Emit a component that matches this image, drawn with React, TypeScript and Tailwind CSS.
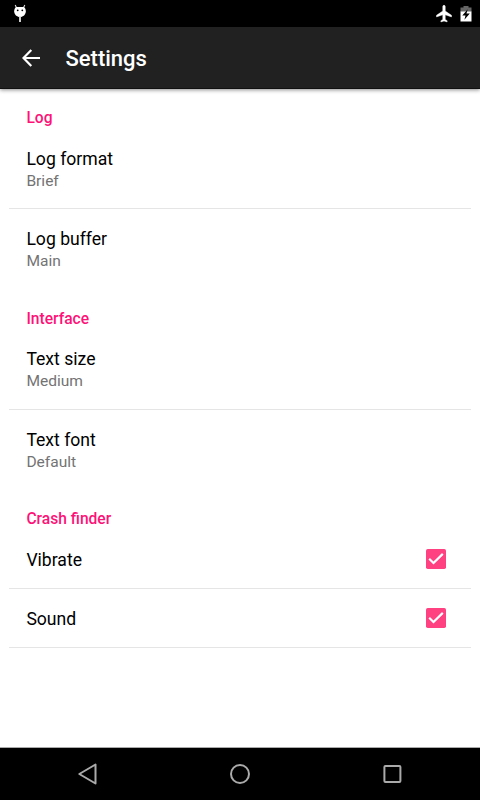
const sections = [
  {
    title: 'Log',
    items: [
      { label: 'Log format', value: 'Brief' },
      { label: 'Log buffer', value: 'Main' },
    ],
  },
  {
    title: 'Interface',
    items: [
      { label: 'Text size', value: 'Medium' },
      { label: 'Text font', value: 'Default' },
    ],
  },
];

const toggles = ['Vibrate', 'Sound'];

function StatusBar() {
  return (
    <div className="flex h-[27px] shrink-0 items-center bg-black pl-[13px] pr-2">
      {/* Debug notification */}
      <svg width="14" height="20" viewBox="0 0 14 20" className="mt-px">
        <path d="M2.2 1 3.6 4M11.8 1 10.4 4" stroke="#ddd" strokeWidth="1.1" />
        <path d="M3.2 3h7.6c1.3 1 2 2.5 2 4.2C12.8 10.6 10.2 13 7 13S1.2 10.6 1.2 7.2C1.2 5.5 1.9 4 3.2 3z" fill="#fff" />
        <path d="M7 12.5v5.5" stroke="#ccc" strokeWidth="2" />
        <circle cx="4.7" cy="6.3" r=".9" fill="#000" />
        <circle cx="9.3" cy="6.3" r=".9" fill="#000" />
      </svg>
      <svg width="20" height="20" viewBox="0 0 24 24" className="ml-auto" fill="#fff" stroke="#fff" strokeWidth=".5">
        <path d="M21 15.5v-2l-7.5-5V3c0-.83-.67-1.5-1.5-1.5S10.5 2.17 10.5 3v5.5l-7.5 5v2l7.5-2.5v5.5l-2.25 1.5V21.5l3.75-1 3.75 1V20l-2.25-1.500V13z" />
      </svg>
      <svg width="12" height="18" viewBox="0 0 12 18" className="ml-[6px] mt-px">
        <path d="M.5 2.5H3.5V1h5v1.5h3V7H.5z" fill="#666" />
        <path d="M.5 6.5h11V16.5H.5z" fill="#fff" />
        <path d="M7.7 4.3 2.3 10.4h3.2L4.4 14.8 9.8 8.6H6.5z" fill="#000" />
      </svg>
    </div>
  );
}

function SectionTitle({ children }: { children: string }) {
  return (
    <h2 className="h-[39.7px] pl-[26.4px] pt-[19.4px] text-[15.6px] font-medium leading-5 text-[#ff1177]">
      {children}
    </h2>
  );
}

function Checkbox() {
  return (
    <svg width="20" height="20" viewBox="0 0 20 20">
      <rect width="20" height="20" rx="1.8" fill="#ff4081" />
      <path d="M3.2 9.8 7.5 14 16.8 4.9" fill="none" stroke="#fff" strokeWidth="2.2" />
    </svg>
  );
}

export default function App() {
  return (
    <div className="flex h-[800px] w-[480px] flex-col overflow-hidden bg-white font-['Roboto',sans-serif]">
      <StatusBar />
      <header className="relative flex h-[62px] shrink-0 items-center border-b border-[#111] bg-[#212121] shadow-[0_1px_4px_rgba(0,0,0,0.45)]">
        <svg width="18" height="18" viewBox="0 0 18 18" className="ml-[22px]" fill="none" stroke="#fff" strokeWidth="2.2">
          <path d="M9.3.9 1.5 9l7.8 8.100M1.4 9H18" />
        </svg>
        <h1 className="ml-[25.5px] mt-[3px] text-[22px] font-medium leading-7 text-white">Settings</h1>
      </header>

      <main className="flex-1">
        {sections.map((s) => (
          <section key={s.title}>
            <SectionTitle>{s.title}</SectionTitle>
            {s.items.map((item, i) => (
              <div
                key={item.label}
                className={`mx-[9px] h-[80.4px] pl-[17.4px] pt-[18px] ${i === 0 ? 'border-b border-[#e5e5e5]' : ''}`}
              >
                <p className="text-[17.6px] leading-6 text-black">{item.label}</p>
                <p className="text-[15.55px] leading-[21.6px] text-[#737373]">{item.value}</p>
              </div>
            ))}
          </section>
        ))}

        <section>
          <SectionTitle>Crash finder</SectionTitle>
          {toggles.map((label) => (
            <div
              key={label}
              className="mx-[9px] flex h-[59.2px] items-center justify-between border-b border-[#e5e5e5] pl-[17.4px] pr-[25px]"
            >
              <span className="pt-[2px] text-[17.6px] leading-6 text-black">{label}</span>
              <Checkbox />
            </div>
          ))}
        </section>
      </main>

      {/* Navigation bar */}
      <nav className="flex h-[53px] shrink-0 items-center justify-between border-t border-[#aaa] bg-black px-[77px]">
        <svg width="22" height="24" viewBox="0 0 22 24" fill="none" stroke="#aaa" strokeWidth="2">
          <path d="M18.5 2.5v19L2.3 12z" strokeLinejoin="round" />
        </svg>
        <svg width="22" height="22" viewBox="0 0 22 22" fill="none" stroke="#aaa" strokeWidth="2">
          <circle cx="11" cy="11" r="9" />
        </svg>
        <svg width="22" height="22" viewBox="0 0 22 22" fill="none" stroke="#aaa" strokeWidth="2">
          <rect x="3.4" y="3" width="16" height="16" rx="1" />
        </svg>
      </nav>
    </div>
  );
}
